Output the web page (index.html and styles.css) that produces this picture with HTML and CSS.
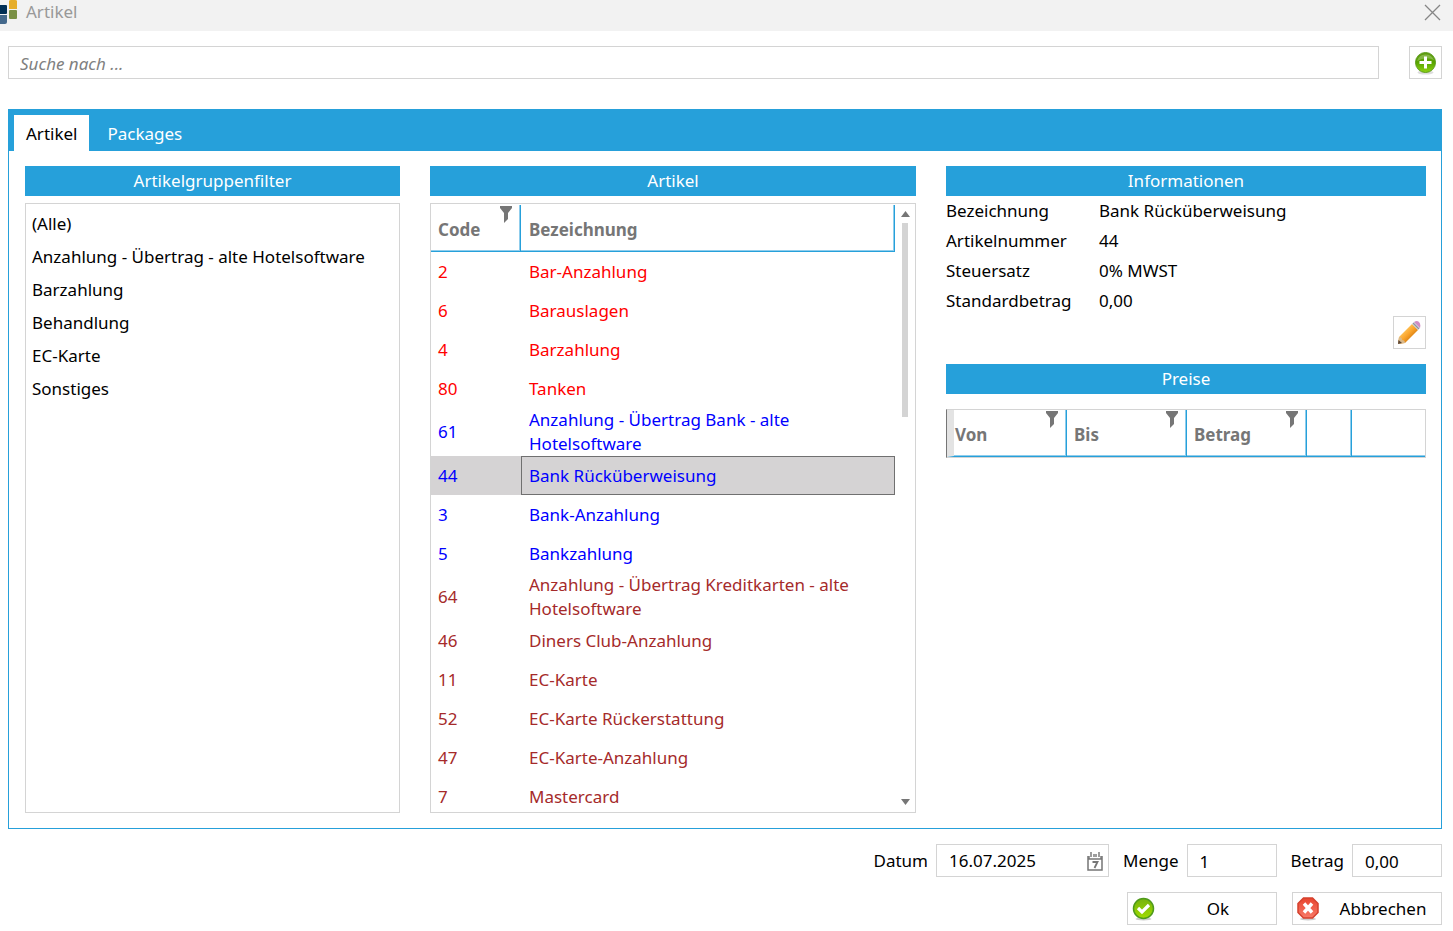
FILE: index.html
```html
<!DOCTYPE html>
<html lang="de">
<head>
<meta charset="utf-8">
<title>Artikel</title>
<link rel="stylesheet" href="styles.css">
</head>
<body>
<svg class="defs" aria-hidden="true">
  <symbol id="funnel" viewBox="0 0 12 17"><path d="M0 0h12v2L8 7v6l-4 4V7L0 2z" fill="#767676"/></symbol>
  <linearGradient id="green" x1="0" y1="0" x2="0" y2="1"><stop offset="0" stop-color="#5f9a10"/><stop offset=".5" stop-color="#58a400"/><stop offset="1" stop-color="#8ed414"/></linearGradient>
  <linearGradient id="lime" x1="0" y1="0" x2="0" y2="1"><stop offset="0" stop-color="#75b20c"/><stop offset="1" stop-color="#a0dc00"/></linearGradient>
  <linearGradient id="red" x1="0" y1="0" x2="0" y2="1"><stop offset="0" stop-color="#e8452f"/><stop offset="1" stop-color="#f77a68"/></linearGradient>
  <linearGradient id="wood" x1="0" y1="0" x2="1" y2="1"><stop offset=".3" stop-color="#ffc45a"/><stop offset=".5" stop-color="#fba52c"/><stop offset=".7" stop-color="#d97f12"/></linearGradient>
</svg>
<header class="titlebar">
  <svg class="logo" width="17" height="25" viewBox="0 0 17 25" aria-hidden="true">
    <rect x="-3" y="5" width="10" height="9" rx="1" fill="#002f55"/>
    <path d="M0 15h7v7q0 2-2 2H0z" fill="#44698c"/>
    <path d="M9 9V1q0-1 2-1h4q2 0 2 1v8z" fill="#e6ae2c"/>
    <rect x="9" y="10" width="8" height="9" rx="1" fill="#7b9146"/>
  </svg>
  <h1 class="title">Artikel</h1>
  <button class="close" type="button" aria-label="Schließen"><svg width="17" height="17" viewBox="0 0 17 17"><path d="M1 1l15 15M16 1L1 16" stroke="#868686" stroke-width="1.3"/></svg></button>
</header>
<main class="content">
  <div class="searchrow">
    <input class="field search" type="text" placeholder="Suche nach ..." aria-label="Suche nach">
    <button class="iconbtn" type="button" aria-label="Hinzufügen"><svg width="24" height="24" viewBox="0 0 24 24">
      <ellipse cx="11.500" cy="21.500" rx="8" ry="2" fill="#ddd"/><circle cx="11.500" cy="11.500" r="10" fill="url(#green)" stroke="#5c9c1c"/>
      <path d="M3 10a9 9 0 0 1 17-1q-8-4-17 1z" fill="#fff" opacity=".25"/>
      <path d="M10 5.500h3V10h4.500v3H13v4.500h-3V13H5.500v-3H10z" fill="#fff"/></svg></button>
  </div>
  <section class="tabs">
    <div class="tabstrip" role="tablist">
      <button class="tab active" type="button" role="tab" aria-selected="true">Artikel</button>
      <button class="tab" type="button" role="tab" aria-selected="false">Packages</button>
    </div>
    <div class="panel" role="tabpanel">
      <section class="column">
        <h2 class="bar">Artikelgruppenfilter</h2>
        <ul class="box list">
          <li>(Alle)</li>
          <li>Anzahlung - Übertrag - alte Hotelsoftware</li>
          <li>Barzahlung</li>
          <li>Behandlung</li>
          <li>EC-Karte</li>
          <li>Sonstiges</li>
        </ul>
      </section>
      <section class="column">
        <h2 class="bar">Artikel</h2>
        <div class="box gridbox">
          <div class="viewport">
          <table class="articles">
            <thead><tr><th class="code">Code<svg class="funnel"><use href="#funnel"/></svg></th><th>Bezeichnung</th></tr></thead>
            <tbody>
              <tr class="cash"><td>2</td><td>Bar-Anzahlung</td></tr>
              <tr class="cash"><td>6</td><td>Barauslagen</td></tr>
              <tr class="cash"><td>4</td><td>Barzahlung</td></tr>
              <tr class="cash"><td>80</td><td>Tanken</td></tr>
              <tr class="bank"><td>61</td><td>Anzahlung - Übertrag Bank - alte Hotelsoftware</td></tr>
              <tr class="bank selected"><td>44</td><td>Bank Rücküberweisung</td></tr>
              <tr class="bank"><td>3</td><td>Bank-Anzahlung</td></tr>
              <tr class="bank"><td>5</td><td>Bankzahlung</td></tr>
              <tr class="card"><td>64</td><td>Anzahlung - Übertrag Kreditkarten - alte Hotelsoftware</td></tr>
              <tr class="card"><td>46</td><td>Diners Club-Anzahlung</td></tr>
              <tr class="card"><td>11</td><td>EC-Karte</td></tr>
              <tr class="card"><td>52</td><td>EC-Karte Rückerstattung</td></tr>
              <tr class="card"><td>47</td><td>EC-Karte-Anzahlung</td></tr>
              <tr class="card"><td>7</td><td>Mastercard</td></tr>
            </tbody>
          </table>
          </div>
          <div class="scrollbar" aria-hidden="true">
            <svg width="9" height="6" viewBox="0 0 9 6"><path d="M0 6l4.500-6L9 6z" fill="#767676"/></svg>
            <div class="track"><div class="thumb"></div></div>
            <svg width="9" height="6" viewBox="0 0 9 6"><path d="M0 0h9L4.500 6z" fill="#767676"/></svg>
          </div>
        </div>
      </section>
      <section class="column">
        <h2 class="bar">Informationen</h2>
        <dl class="info">
          <dt>Bezeichnung</dt><dd>Bank Rücküberweisung</dd>
          <dt>Artikelnummer</dt><dd>44</dd>
          <dt>Steuersatz</dt><dd>0% MWST</dd>
          <dt>Standardbetrag</dt><dd>0,00</dd>
        </dl>
        <button class="iconbtn edit" type="button" aria-label="Bearbeiten"><svg width="24" height="24" viewBox="0 0 24 24">
          <path d="M0 23l1-7L14 3l6 6L7 22z" fill="url(#wood)"/>
          <path d="M0 23l1-7q3 0 3 3 3 0 3 3z" fill="#d9b98c"/><path d="M0 23l.5-4L4 22z" fill="#5b4636"/>
          <path d="M14 3l2-2 6 6-2 2z" fill="#b9bcc4"/><path d="M15 2l6 6" stroke="#8f929b"/>
          <path d="M16 1q3-2 5 0t1 6z" fill="#d08cc4"/></svg></button>
        <h2 class="bar">Preise</h2>
        <table class="prices">
          <thead><tr>
            <th class="price">Von<svg class="funnel"><use href="#funnel"/></svg></th>
            <th class="price">Bis<svg class="funnel"><use href="#funnel"/></svg></th>
            <th class="price">Betrag<svg class="funnel"><use href="#funnel"/></svg></th>
            <th class="narrow"></th><th></th>
          </tr></thead>
        </table>
      </section>
    </div>
  </section>
  <footer class="footer">
    <div class="formrow">
      <label for="datum">Datum</label>
      <div class="field date">
        <input id="datum" type="text" value="16.07.2025">
        <button type="button" aria-label="Kalender"><svg width="16" height="19" viewBox="0 0 16 19">
          <path d="M1 4v14h14V4" fill="none" stroke="#767676" stroke-width="1.500"/><path d="M1 7h14" stroke="#767676" stroke-width="1.500"/>
          <path d="M4 0v5M12 0v5M7 2v3M9 2v3M2 4v3M14 4v3" stroke="#767676" stroke-width="1.400"/><path d="M5.500 10h5l-3 6" fill="none" stroke="#767676" stroke-width="1.800"/></svg></button>
      </div>
      <label for="menge">Menge</label>
      <input class="field amount" id="menge" type="text" value="1">
      <label for="betrag">Betrag</label>
      <input class="field amount" id="betrag" type="text" value="0,00">
    </div>
    <div class="actions">
      <button class="action" type="button"><svg width="24" height="24" viewBox="0 0 24 24">
        <ellipse cx="11.500" cy="22" rx="8" ry="1.500" fill="#ccc"/><circle cx="11.500" cy="11.500" r="10" fill="url(#lime)" stroke="#4f9a1c" stroke-width="1.500"/>
        <path d="M6 11l4 4 7-7" fill="none" stroke="#fff" stroke-width="3.200"/></svg><span>Ok</span></button>
      <button class="action" type="button"><svg width="24" height="24" viewBox="0 0 24 24">
        <ellipse cx="11" cy="22" rx="8" ry="1.500" fill="#ccc"/><path d="M6.500 1h9L21 6.500v9L15.500 21h-9L1 15.500v-9z" fill="url(#red)" stroke="#d5402d" stroke-width="1.500"/>
        <path d="M7 6.500l8 9M15 6.500l-8 9" stroke="#fff" stroke-width="3.400"/></svg><span>Abbrechen</span></button>
    </div>
  </footer>
</main>
</body>
</html>
```
FILE: styles.css
```css
* { box-sizing: border-box; }
body {
  margin: 0;
  height: 100vh;
  display: flex;
  flex-direction: column;
  background: #fff;
  color: #000;
  font: 17px/24px "Noto Sans", "Open Sans", sans-serif;
}
button, input { font: inherit; color: inherit; margin: 0; }
button { padding: 0; border: 0; background: none; }
h1, h2, ul, dl, dd { margin: 0; padding: 0; font-size: inherit; font-weight: 400; }
svg { display: block; flex: none; }
.defs { position: absolute; width: 0; height: 0; }

.titlebar { display: flex; height: 31px; flex: none; background: #f2f2f2; color: #999; }
.title { margin-left: 9px; flex: 1; }
.close { align-self: flex-start; margin: 4px 12px 0 0; }

.content { flex: 1; min-height: 0; display: flex; flex-direction: column; padding: 15px 11px 6px 8px; }
.searchrow { display: flex; gap: 30px; margin-bottom: 30px; }
.field, .iconbtn, .action { height: 33px; border: 1px solid #d4d4d4; background: #fff; border-radius: 0; }
.field { padding: 1px 12px 0; outline: 0; }
.search { flex: 1; min-width: 0; padding-left: 11px; }
.search::placeholder { color: #808080; font-style: italic; opacity: 1; }
.iconbtn { width: 33px; flex: none; display: flex; align-items: center; justify-content: center; }

.tabs { flex: 1; min-height: 0; display: flex; flex-direction: column; border: 1px solid #26a0da; }
.tabstrip { display: flex; padding: 5px 5px 0; background: #26a0da; }
.tab { height: 36px; padding: 2px 12px 0; color: #fff; }
.tab + .tab { padding: 2px 18px 0; }
.tab.active { background: #fff; color: #000; }
.panel { flex: 1; min-height: 0; display: grid; grid-template: minmax(0, 1fr) / 375fr 486fr 480fr; gap: 30px; padding: 15px 15px 15px 16px; }
.column { display: flex; flex-direction: column; min-width: 0; min-height: 0; }
.bar { height: 30px; line-height: 30px; flex: none; background: #26a0da; color: #fff; text-align: center; }
.box { flex: 1; min-height: 0; margin-top: 7px; border: 1px solid #d4d4d4; }

.list { list-style: none; padding: 3px 6px; line-height: 33px; }

.gridbox { display: flex; padding: 1px 0; }
.viewport { flex: 1; overflow: hidden; }
table { width: 100%; border-collapse: separate; border-spacing: 0; table-layout: fixed; }
th { position: relative; height: 47px; padding: 3px 7px 0; text-align: left; color: #767676; font-weight: 700; border: solid #26a0da; border-width: 0 1px 1px 0; box-shadow: inset -1px -1px #8fcdec; }
.funnel { position: absolute; top: 1px; right: 8px; width: 12px; height: 17px; }
.code { width: 90px; }
.articles td { height: 39px; padding: 0 7px; }
.articles td + td, .articles th + th { padding-left: 8px; }
.cash { color: #f00; }
.bank { color: #00f; }
.card { color: #a52a2a; }
.selected td { background: #d5d3d4; }
.articles .selected td + td { border: 1px solid #707070; padding-left: 7px; }
.scrollbar { width: 20px; padding: 6px 0; display: flex; flex-direction: column; align-items: center; }
.track { flex: 1; padding: 6px 0; }
.thumb { width: 6px; height: 34%; background: #d4d4d4; }

.info { display: grid; grid-template-columns: 153px 1fr; line-height: 30px; }
.edit { align-self: flex-end; margin-bottom: 15px; }
.prices { margin-top: 15px; border: 1px solid #d4d4d4; border-left-color: #767676; }
.prices th:first-child { border-left: 7px solid #e3e3e3; padding-left: 1px; }
.prices th:last-child { border-right: 0; box-shadow: inset 0 -1px #8fcdec; }
.price { width: 120px; }
.narrow { width: 45px; }

.footer { flex: none; padding-top: 15px; }
.formrow { display: flex; justify-content: flex-end; align-items: center; }
.formrow label { margin: 0 8px 0 14px; padding-top: 1px; }
.date { display: flex; align-items: center; width: 173px; padding-right: 5px; }
.date input { flex: 1; min-width: 0; border: 0; padding: 0; outline: 0; background: none; }
.amount { width: 90px; }
.actions { display: flex; justify-content: flex-end; gap: 15px; margin-top: 15px; }
.action { width: 150px; display: flex; align-items: center; padding: 0 0 0 4px; }
.action span { flex: 1; text-align: center; padding: 1px 0 0 4px; }
```
